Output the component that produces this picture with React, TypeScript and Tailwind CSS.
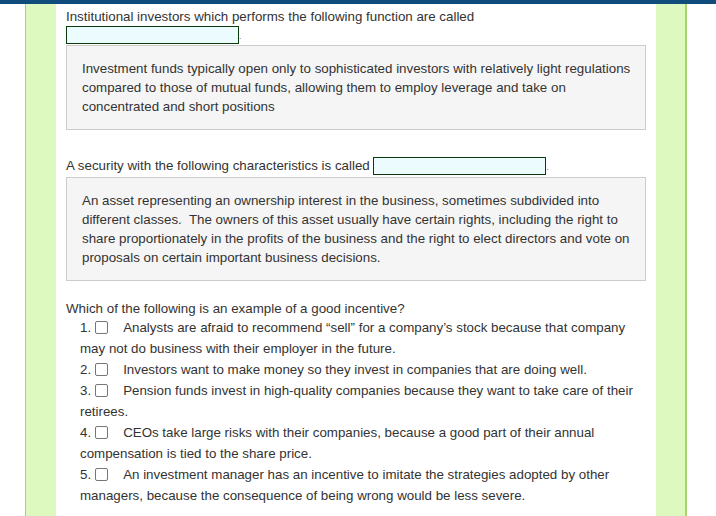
const checks = [
  {
    n: 1,
    text: "Analysts are afraid to recommend \u201csell\u201d for a company\u2019s stock because that company may not do business with their employer in the future.",
  },
  { n: 2, text: "Investors want to make money so they invest in companies that are doing well." },
  {
    n: 3,
    text: "Pension funds invest in high-quality companies because they want to take care of their retirees.",
  },
  {
    n: 4,
    text: "CEOs take large risks with their companies, because a good part of their annual compensation is tied to the share price.",
  },
  {
    n: 5,
    text: "An investment manager has an incentive to imitate the strategies adopted by other managers, because the consequence of being wrong would be less severe.",
  },
]

function Blank() {
  return (
    <span className="inline-block w-[173px] h-[18px] border border-[#0b3a0b] bg-[#ecfbfe] align-[-5px]" />
  )
}

function Note({ children }: { children: React.ReactNode }) {
  return (
    <div className="border border-[#cccccc] bg-[#f5f5f5] pl-[15px] pr-[10px] py-[13px] leading-[19px]">
      {children}
    </div>
  )
}

export default function App() {
  return (
    <div
      className="min-h-[516px] bg-white text-[13.33px] text-[#333333] border-t-4 border-[#0f4c7c] overflow-hidden"
      style={{ fontFamily: '"Liberation Sans", Arial, sans-serif' }}
    >
      <div className="flex min-h-[512px]">
        <div className="w-[25px] shrink-0" />
        <div className="w-[31px] shrink-0 bg-[#ddf9c0] border-l border-[#a6d66a]" />
        <div className="w-[600px] shrink-0 px-[10px] pt-[3px] pb-2">
          {/* Question 1 */}
          <div className="leading-[19px]">Institutional investors which performs the following function are called</div>
          <div className="leading-[18px] h-[19px]">
            <Blank />
            <span className="text-[8px]">.</span>
          </div>
          <Note>
            Investment funds typically open only to sophisticated investors with relatively light regulations
            compared to those of mutual funds, allowing them to employ leverage and take on concentrated and short
            positions
          </Note>

          {/* Question 2 */}
          <div className="mt-[27px] h-[20px] leading-[18px]">
            A security with the following characteristics is called <Blank />
            <span className="text-[8px]">.</span>
          </div>
          <Note>
            An asset representing an ownership interest in the business, sometimes subdivided into different
            classes.&nbsp; The owners of this asset usually have certain rights, including the right to share
            proportionately in the profits of the business and the right to elect directors and vote on proposals on
            certain important business decisions.
          </Note>

          {/* Question 3 */}
          <div className="mt-[18px] leading-[19px]">Which of the following is an example of a good incentive?</div>
          <ol className="pl-[14px] leading-[21px] -mt-[1px]">
            {checks.map((c) => (
              <li key={c.n}>
                <span>{c.n}.</span>
                <span className="inline-block w-[13px] h-[13px] ml-[4px] mr-[15px] border border-[#767676] rounded-[2px] bg-white align-[-2px]" />
                <span>{c.text}</span>
              </li>
            ))}
          </ol>
        </div>
        <div className="w-[31px] shrink-0 bg-[#ddf9c0] border-r-2 border-[#a6d66a]" />
        <div className="flex-1" />
      </div>
    </div>
  )
}
